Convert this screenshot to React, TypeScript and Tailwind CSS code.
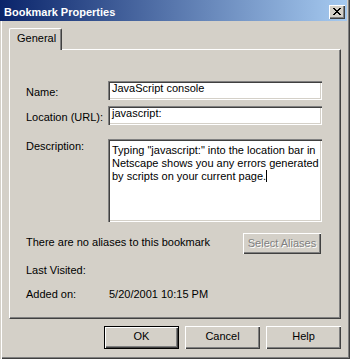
import React from 'react';

// classic 3D bevels
const raised = 'shadow-[inset_1px_1px_0_#ffffff,inset_-1px_-1px_0_#404040,inset_-2px_-2px_0_#808080]';
const sunken = 'shadow-[inset_1px_1px_0_#808080,inset_2px_2px_0_#404040,inset_-1px_-1px_0_#ffffff,inset_-2px_-2px_0_#D4D0C8]';

const CloseGlyph: React.FC = () => {
  // 8x7 pixel X
  const rows: [number, number][][] = [
    [[0, 2], [6, 2]],
    [[1, 2], [5, 2]],
    [[2, 4]],
    [[3, 2]],
    [[2, 4]],
    [[1, 2], [5, 2]],
    [[0, 2], [6, 2]],
  ];
  return (
    <svg width="8" height="7" viewBox="0 0 8 7" shapeRendering="crispEdges">
      {rows.map((segs, y) =>
        segs.map(([x, w], i) => <rect key={`${y}-${i}`} x={x} y={y} width={w} height={1} fill="#000" />)
      )}
    </svg>
  );
};

const Field: React.FC<{ label: string; value: string; className?: string }> = ({ label, value, className }) => (
  <div className={`flex items-start ${className ?? ''}`}>
    <div className="w-[82px] pt-[5px]">{label}</div>
    <div className={`h-[19px] w-[214px] bg-white pl-[4px] pt-px whitespace-nowrap ${sunken}`}>{value}</div>
  </div>
);

const DialogButton: React.FC<{ label: string; isDefault?: boolean }> = ({ label, isDefault }) => (
  <div
    className={`flex h-[23px] w-[75px] items-center justify-center pb-[2px] ${raised} ${
      isDefault ? 'border border-black' : ''
    }`}
  >
    {label}
  </div>
);

export default function App() {
  return (
    <div className="relative h-[359px] w-[350px] overflow-hidden bg-[#D4D0C8] font-['Liberation_Sans',Arial,sans-serif] text-[11px] leading-[13px] text-black shadow-[inset_1px_0_0_#D4D0C8,inset_2px_0_0_#ffffff,inset_-1px_-1px_0_#404040,inset_-2px_-2px_0_#808080]">
      {/* Title bar */}
      <div className="mr-[3px] flex h-[21px] items-start justify-between bg-[linear-gradient(to_right,#0A246A,#A6CAF0)]">
        <span className="pl-[4px] pt-[6px] font-bold text-white">Bookmark Properties</span>
        <div className={`mr-[2px] mt-[5px] flex h-[14px] w-[16px] items-start bg-[#D4D0C8] pl-[4px] pt-[3px] ${raised}`}>
          <CloseGlyph />
        </div>
      </div>

      <div className="pl-[9px] pt-[7px]">
        {/* Tab */}
        <div className="relative z-10 h-[22px] w-[53px] rounded-t-[2px] border-l border-r border-t border-l-white border-r-[#404040] border-t-white bg-[#D4D0C8] pl-[7px] pt-[3px] shadow-[inset_-1px_0_0_#808080]">
          General
        </div>

        {/* Tab panel */}
        <div className="-mt-px h-[270px] w-[332px] border border-b-[#404040] border-l-white border-r-[#404040] border-t-white pl-[16px] pt-[31px] shadow-[inset_-1px_-1px_0_#808080]">
          <Field label="Name:" value="JavaScript console" />
          <Field label="Location (URL):" value="javascript:" className="mt-[6px]" />

          <div className="mt-[14px] flex items-start">
            <div className="w-[82px] pt-px">Description:</div>
            <div className={`h-[83px] w-[214px] bg-white pl-[4px] pt-[5px] whitespace-nowrap ${sunken}`}>
              Typing "javascript:" into the location bar in
              <br />
              Netscape shows you any errors generated
              <br />
              by scripts on your current page.
              <span className="inline-block h-[12px] w-px bg-black align-[-2px]" />
            </div>
          </div>

          <div className="mt-[11px] flex w-[295px] items-start justify-between">
            <div className="pt-[3px]">There are no aliases to this bookmark</div>
            <div className={`flex h-[21px] w-[78px] items-center justify-center pb-px text-[#808080] [text-shadow:1px_1px_0_#ffffff] ${raised}`}>
              Select Aliases
            </div>
          </div>

          <div className="mt-[10px] flex">
            <div className="w-[83px]">Last Visited:</div>
          </div>
          <div className="mt-[11px] flex">
            <div className="w-[83px]">Added on:</div>
            <div>5/20/2001 10:15 PM</div>
          </div>
        </div>

        {/* Buttons */}
        <div className="mt-[7px] flex w-[332px] justify-end gap-[6px]">
          <DialogButton label="OK" isDefault />
          <DialogButton label="Cancel" />
          <DialogButton label="Help" />
        </div>
      </div>
    </div>
  );
}
